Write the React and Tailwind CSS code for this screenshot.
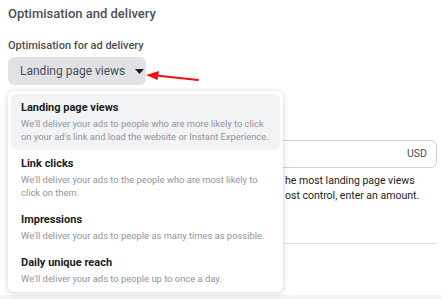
import React from 'react';

const options = [
  {
    title: 'Landing page views',
    desc: "We'll deliver your ads to people who are more likely to click on your ad's link and load the website or Instant Experience.",
    active: true,
  },
  {
    title: 'Link clicks',
    desc: "We'll deliver your ads to the people who are most likely to click on them.",
  },
  {
    title: 'Impressions',
    desc: "We'll deliver your ads to people as many times as possible.",
  },
  {
    title: 'Daily unique reach',
    desc: "We'll deliver your ads to people up to once a day.",
  },
];

const App = () => {
  return (
    <div
      className="relative w-[441px] h-[299px] overflow-hidden bg-white flex flex-col"
      style={{ fontFamily: 'Roboto, "Liberation Sans", sans-serif' }}
    >
      <div className="flex-1 px-2 pt-[5px]">
        {/* Section title */}
        <div className="text-[13px] leading-[18px] font-medium text-[#4b4f56]">
          Optimisation and delivery
        </div>

        {/* Optimisation field */}
        <div className="mt-[15px] text-[11px] leading-[16px] font-medium text-[#4b4f56]">
          Optimisation for ad delivery
        </div>
        <button className="mt-[3px] h-[28px] w-[138px] rounded-md bg-[#e0e2e6] flex items-center pl-3 gap-[10px] text-[12px] text-[#4b4f56] whitespace-nowrap">
          <span>Landing page views</span>
          <svg width="9" height="5" viewBox="0 0 9 5">
            <path d="M0 0 L9 0 L4.5 5 Z" fill="#1c1e21" />
          </svg>
        </button>

        {/* Cost per result goal (mostly under the menu) */}
        <div className="mt-[55px] h-[28px] w-[429px] rounded-md border border-[#ccd0d5] flex items-center justify-end pr-[9px] text-[10.5px] text-[#4b4f56]">
          USD
        </div>
        <div className="mt-[5px] text-[10.5px] leading-[15px] text-[#1c1e21] whitespace-nowrap">
          <div className="flex">
            <span className="w-[277px] shrink-0" />
            <span>he most landing page views</span>
          </div>
          <div className="flex">
            <span className="w-[277px] shrink-0" />
            <span>ost control, enter an amount.</span>
          </div>
        </div>

        <div className="mt-[40px] h-px w-[429px] bg-[#dddfe2]" />
      </div>

      <div className="h-[4px] bg-[#f0f2f5]" />

      {/* Red annotation arrow */}
      <svg className="absolute left-[144px] top-[68px]" width="58" height="16" viewBox="0 0 58 16">
        <line x1="12" y1="7.5" x2="54" y2="12" stroke="#ee1111" strokeWidth="2" strokeLinecap="round" />
        <path d="M2 7 L15 3 L13.5 12 Z" fill="#ee1111" />
      </svg>

      {/* Dropdown menu */}
      <div className="absolute left-2 top-[91px] w-[275px] h-[201px] overflow-hidden rounded-md bg-white p-[3px] shadow-[0_1px_6px_rgba(0,0,0,0.18)]">
        {options.map((o) => (
          <div
            key={o.title}
            className={`rounded-md pl-[10px] pr-1 pt-[5px] pb-[7px] ${o.active ? 'bg-[#f2f3f5]' : ''}`}
          >
            <div className="text-[11px] leading-[17px] font-bold text-[#1c1e21]">{o.title}</div>
            <div className="mt-[1px] text-[9.4px] leading-[13px] text-[#90949c]">{o.desc}</div>
          </div>
        ))}
      </div>
    </div>
  );
};

export default App;
